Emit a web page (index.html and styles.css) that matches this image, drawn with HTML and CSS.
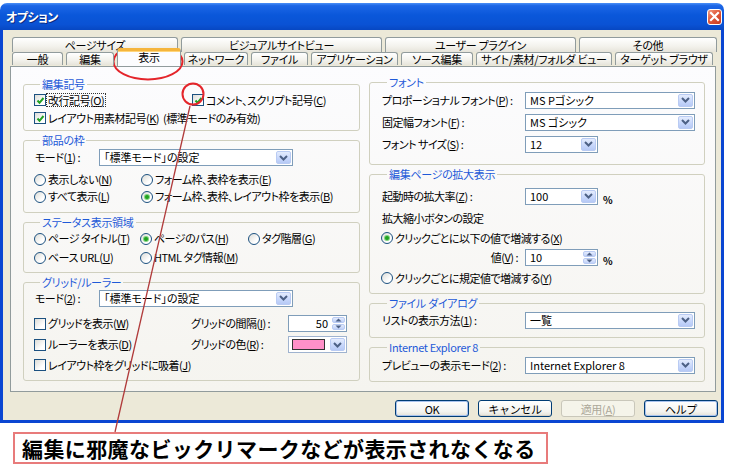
FILE: index.html
```html
<!DOCTYPE html>
<html lang="ja">
<head>
<meta charset="utf-8">
<title>オプション</title>
<link rel="stylesheet" href="styles.css">
</head>
<body>
<div class="window">
  <div class="titlebar">
    <span class="title">オプション</span>
    <span class="close"><svg width="11" height="11" viewBox="0 0 11 11"><path d="M2 2 L9 9 M9 2 L2 9" stroke="#fff" stroke-width="2.2" stroke-linecap="square"/></svg></span>
  </div>
  <div class="client">
    <div class="tabs">
      <div class="tabrow back">
        <div class="tab t1">ページサイズ</div>
        <div class="tab t2">ビジュアルサイトビュー</div>
        <div class="tab t3">ユーザー プラグイン</div>
        <div class="tab t4">その他</div>
      </div>
      <div class="tabrow front">
        <div class="tab f1">一般</div>
        <div class="tab f2">編集</div>
        <div class="tab f3 sel">表示</div>
        <div class="tab f4">ネットワーク</div>
        <div class="tab f5">ファイル</div>
        <div class="tab f6">アプリケーション</div>
        <div class="tab f7">ソース編集</div>
        <div class="tab f8">サイト/素材/フォルダ ビュー</div>
        <div class="tab f9">ターゲット ブラウザ</div>
      </div>
    </div>
    <div class="panel">
      <div class="col col-left">
        <fieldset class="grp g1">
          <legend>編集記号</legend>
          <div class="row r18 cols-g1">
            <label class="opt"><span class="cb on"><svg width="9" height="9" viewBox="0 0 9 9"><path d="M1.5 4.5 L3.5 6.8 L7.5 2" stroke="#21A121" stroke-width="2" fill="none"/></svg></span><span class="focus">改行記号(<u>O</u>)</span></label>
            <label class="opt"><span class="cb on"><svg width="9" height="9" viewBox="0 0 9 9"><path d="M1.5 4.5 L3.5 6.8 L7.5 2" stroke="#21A121" stroke-width="2" fill="none"/></svg></span><span class="txt">コメント、スクリプト記号(<u>C</u>)</span></label>
          </div>
          <div class="row r18">
            <label class="opt"><span class="cb on"><svg width="9" height="9" viewBox="0 0 9 9"><path d="M1.5 4.5 L3.5 6.8 L7.5 2" stroke="#21A121" stroke-width="2" fill="none"/></svg></span><span class="txt">レイアウト用素材記号(<u>K</u>)&nbsp;&nbsp;(標準モードのみ有効)</span></label>
          </div>
        </fieldset>

        <fieldset class="grp g2">
          <legend>部品の枠</legend>
          <div class="row r21 cols-mode">
            <span class="lbl">モード(<u>1</u>) :</span>
            <div class="combo w194"><span class="val">「標準モード」の設定</span><span class="dd"><svg width="9" height="6" viewBox="0 0 9 6"><path d="M1 1 L4.5 4.5 L8 1" stroke="#4D6185" stroke-width="2" fill="none"/></svg></span></div>
          </div>
          <div class="radios">
            <div class="row r17 cols-r2">
              <label class="opt"><span class="rb"></span><span class="txt">表示しない(<u>N</u>)</span></label>
              <label class="opt"><span class="rb"></span><span class="txt">フォーム枠、表枠を表示(<u>E</u>)</span></label>
            </div>
            <div class="row r17 cols-r2">
              <label class="opt"><span class="rb"></span><span class="txt">すべて表示(<u>L</u>)</span></label>
              <label class="opt"><span class="rb on"></span><span class="txt">フォーム枠、表枠、レイアウト枠を表示(<u>B</u>)</span></label>
            </div>
          </div>
        </fieldset>

        <fieldset class="grp g3">
          <legend>ステータス表示領域</legend>
          <div class="row r19 cols-r3">
            <label class="opt"><span class="rb"></span><span class="txt">ページ タイトル(<u>T</u>)</span></label>
            <label class="opt"><span class="rb on"></span><span class="txt">ページのパス(<u>H</u>)</span></label>
            <label class="opt"><span class="rb"></span><span class="txt">タグ階層(<u>G</u>)</span></label>
          </div>
          <div class="row r19 cols-r3">
            <label class="opt"><span class="rb"></span><span class="txt">ベース URL(<u>U</u>)</span></label>
            <label class="opt"><span class="rb"></span><span class="txt">HTML タグ情報(<u>M</u>)</span></label>
          </div>
        </fieldset>

        <fieldset class="grp g4">
          <legend>グリッド/ルーラー</legend>
          <div class="row r20 cols-mode">
            <span class="lbl">モード(<u>2</u>) :</span>
            <div class="combo w194"><span class="val">「標準モード」の設定</span><span class="dd"><svg width="9" height="6" viewBox="0 0 9 6"><path d="M1 1 L4.5 4.5 L8 1" stroke="#4D6185" stroke-width="2" fill="none"/></svg></span></div>
          </div>
          <div class="gridrows">
            <div class="row r21 cols-grid">
              <label class="opt"><span class="cb"></span><span class="txt">グリッドを表示(<u>W</u>)</span></label>
              <span class="lbl">グリッドの間隔(<u>I</u>) :</span>
              <div class="spin w59"><span class="val right">50</span><span class="arrows"><span class="up"><svg width="7" height="4" viewBox="0 0 7 4"><path d="M0.5 3.5 L3.5 0.5 L6.5 3.5Z" fill="#4D6185"/></svg></span><span class="down"><svg width="7" height="4" viewBox="0 0 7 4"><path d="M0.5 0.5 L3.5 3.5 L6.5 0.5Z" fill="#4D6185"/></svg></span></span></div>
            </div>
            <div class="row r21 cols-grid">
              <label class="opt"><span class="cb"></span><span class="txt">ルーラーを表示(<u>D</u>)</span></label>
              <span class="lbl">グリッドの色(<u>R</u>) :</span>
              <div class="colorpick w59"><span class="swatch"></span><span class="dd"><svg width="9" height="6" viewBox="0 0 9 6"><path d="M1 1 L4.5 4.5 L8 1" stroke="#4D6185" stroke-width="2" fill="none"/></svg></span></div>
            </div>
            <div class="row r20">
              <label class="opt"><span class="cb"></span><span class="txt">レイアウト枠をグリッドに吸着(<u>J</u>)</span></label>
            </div>
          </div>
        </fieldset>
      </div>

      <div class="col col-right">
        <fieldset class="grp h1">
          <legend>フォント</legend>
          <div class="row r22 cols-right">
            <span class="lbl">プロポーショナル フォント(<u>P</u>) :</span>
            <div class="combo w170"><span class="val">MS Pゴシック</span><span class="dd"><svg width="9" height="6" viewBox="0 0 9 6"><path d="M1 1 L4.5 4.5 L8 1" stroke="#4D6185" stroke-width="2" fill="none"/></svg></span></div>
          </div>
          <div class="row r22 cols-right">
            <span class="lbl">固定幅フォント(<u>F</u>) :</span>
            <div class="combo w170"><span class="val">MS ゴシック</span><span class="dd"><svg width="9" height="6" viewBox="0 0 9 6"><path d="M1 1 L4.5 4.5 L8 1" stroke="#4D6185" stroke-width="2" fill="none"/></svg></span></div>
          </div>
          <div class="row r22 cols-right">
            <span class="lbl">フォント サイズ(<u>S</u>) :</span>
            <div class="combo w73"><span class="val">12</span><span class="dd"><svg width="9" height="6" viewBox="0 0 9 6"><path d="M1 1 L4.5 4.5 L8 1" stroke="#4D6185" stroke-width="2" fill="none"/></svg></span></div>
          </div>
        </fieldset>

        <fieldset class="grp h2">
          <legend>編集ページの拡大表示</legend>
          <div class="row r22 cols-right">
            <span class="lbl">起動時の拡大率(<u>Z</u>) :</span>
            <div class="withunit"><div class="combo w73"><span class="val">100</span><span class="dd"><svg width="9" height="6" viewBox="0 0 9 6"><path d="M1 1 L4.5 4.5 L8 1" stroke="#4D6185" stroke-width="2" fill="none"/></svg></span></div><span class="unit">%</span></div>
          </div>
          <div class="row r22">
            <span class="lbl">拡大縮小ボタンの設定</span>
          </div>
          <div class="row r18">
            <label class="opt"><span class="rb on"></span><span class="txt">クリックごとに以下の値で増減する(<u>X</u>)</span></label>
          </div>
          <div class="row r20 cols-right">
            <span class="lbl rt">値(<u>V</u>) :</span>
            <div class="withunit"><div class="spin w73"><span class="val">10</span><span class="arrows"><span class="up"><svg width="7" height="4" viewBox="0 0 7 4"><path d="M0.5 3.5 L3.5 0.5 L6.5 3.5Z" fill="#4D6185"/></svg></span><span class="down"><svg width="7" height="4" viewBox="0 0 7 4"><path d="M0.5 0.5 L3.5 3.5 L6.5 0.5Z" fill="#4D6185"/></svg></span></span></div><span class="unit">%</span></div>
          </div>
          <div class="row r22">
            <label class="opt"><span class="rb"></span><span class="txt">クリックごとに規定値で増減する(<u>Y</u>)</span></label>
          </div>
        </fieldset>

        <fieldset class="grp h3">
          <legend>ファイル ダイアログ</legend>
          <div class="row r22 cols-right">
            <span class="lbl">リストの表示方法(<u>1</u>) :</span>
            <div class="combo w170"><span class="val">一覧</span><span class="dd"><svg width="9" height="6" viewBox="0 0 9 6"><path d="M1 1 L4.5 4.5 L8 1" stroke="#4D6185" stroke-width="2" fill="none"/></svg></span></div>
          </div>
        </fieldset>

        <fieldset class="grp h4">
          <legend>Internet Explorer 8</legend>
          <div class="row r20 cols-right">
            <span class="lbl">プレビューの表示モード(<u>2</u>) :</span>
            <div class="combo w170"><span class="val">Internet Explorer 8</span><span class="dd"><svg width="9" height="6" viewBox="0 0 9 6"><path d="M1 1 L4.5 4.5 L8 1" stroke="#4D6185" stroke-width="2" fill="none"/></svg></span></div>
          </div>
        </fieldset>
      </div>
    </div>
    <div class="buttons">
      <button class="btn def">OK</button>
      <button class="btn">キャンセル</button>
      <button class="btn dis">適用(<u>A</u>)</button>
      <button class="btn def">ヘルプ</button>
    </div>
  </div>
</div>
<div class="note">編集に邪魔なビックリマークなどが表示されなくなる</div>
<svg class="marks" width="730" height="471" viewBox="0 0 730 471">
  <line x1="190" y1="106" x2="115" y2="432" stroke="#B03A3A" stroke-width="1.3"/>
  <ellipse cx="148" cy="61.5" rx="34.5" ry="18" fill="none" stroke="#E4252B" stroke-width="2"/>
  <circle cx="193" cy="94" r="10.5" fill="none" stroke="#E4252B" stroke-width="2"/>
</svg>
</body>
</html>
```

FILE: styles.css
```css
* { box-sizing: border-box; }
html, body { margin: 0; padding: 0; background: #fff; }
body {
  width: 730px;
  height: 471px;
  overflow: hidden;
  position: relative;
  font-family: "Noto Sans CJK JP", "Noto Sans", sans-serif;
  font-size: 11px;
  line-height: 13px;
  color: #000;
  font-feature-settings: "palt";
}
u { text-decoration: underline; text-underline-offset: 1px; }

.window { margin-top: 3px; width: 724px; }
.titlebar {
  height: 27px;
  border-radius: 7px 7px 0 0;
  background: linear-gradient(#4A8FF7 0%, #1C66E6 10%, #0A57DA 45%, #0A52D4 80%, #0747C2 100%);
  display: flex;
  align-items: center;
  justify-content: space-between;
  padding: 0 2px 0 6px;
}
.title { color: #fff; font-weight: 700; font-size: 12px; line-height: 14px; text-shadow: 1px 1px #0A2A80; letter-spacing: -0.5px; }
.close {
  width: 15px; height: 16px;
  border: 1px solid #fff;
  border-radius: 3px;
  background: linear-gradient(135deg, #F3A085, #E0583A 45%, #C93A20);
  display: flex; align-items: center; justify-content: center;
}

.client {
  height: 393px;
  background: #ECE9D8;
  border: 3px solid #0A46D2;
  border-top: 0;
}

.tabs { padding: 7px 0 0 9px; position: relative; z-index: 1; }
.tabrow { display: flex; gap: 3px; }
.tab {
  border: 1px solid #919B9C;
  border-bottom: 0;
  border-radius: 3px 3px 0 0;
  background: linear-gradient(#FFFFFF, #F3F2EC 60%, #E6E4DA);
  text-align: center;
  white-space: nowrap;
  letter-spacing: -0.3px;
}
.back .tab { height: 15px; line-height: 14px; }
.front .tab { height: 13px; line-height: 12px; }
.front .tab.sel {
  height: 18px;
  margin-top: -4px;
  line-height: 13px;
  background: #FCFCFE;
  border-top: 3px solid #F5B53C;
  box-shadow: inset 0 1px #FFD57A;
}
.t1 { width: 166px; } .t2 { width: 201px; } .t3 { width: 191px; } .t4 { width: 138px; }
.f1 { width: 51px; } .f2 { width: 48px; } .f3 { width: 64px; } .f4 { width: 64px; }
.f5 { width: 57px; } .f6 { width: 87px; } .f7 { width: 72px; } .f8 { width: 136px; } .f9 { width: 98px; }

.panel {
  margin-left: 7px;
  width: 706px;
  height: 326px;
  border: 1px solid #919B9C;
  background: linear-gradient(#FCFCFE, #F5F4EF);
  display: flex;
  gap: 9px;
  padding: 0 10px 0 12px;
  letter-spacing: -0.5px;
}
.col { display: flex; flex-direction: column; gap: 3px; }
.col-left { width: 337px; padding-top: 11px; }
.col-right { width: 336px; padding-top: 9px; }

fieldset.grp {
  margin: 0;
  padding: 0 0 0 10px;
  border: 1px solid #D0D0BF;
  border-radius: 3px;
  min-width: 0;
}
.col-right fieldset.grp { padding-left: 11px; }
legend {
  padding: 0 2px;
  margin-left: 6px;
  color: #1F5AD8;
  line-height: 12px;
  font-size: 11px;
  letter-spacing: -0.3px;
}
.g1 { padding-top: 1px !important; padding-bottom: 3px !important; }
.g2 { padding-top: 1px !important; padding-bottom: 7px !important; }
.g2 .radios { margin-top: 3px; }
.g3 { padding-top: 1px !important; padding-bottom: 5px !important; }
.g4 { padding-bottom: 5px !important; }
.g4 .gridrows { margin-top: 5px; }
.h1 { padding-top: 1px !important; padding-bottom: 9px !important; }
.h2 { padding-top: 5px !important; padding-bottom: 4px !important; }
.h3 { padding-bottom: 6px !important; }
.h4 { padding-top: 2px !important; padding-bottom: 6px !important; }

.row { display: flex; align-items: center; white-space: nowrap; }
.r17 { height: 17px; } .r18 { height: 18px; } .r19 { height: 19px; }
.r20 { height: 20px; } .r21 { height: 21px; } .r22 { height: 22px; }
.cols-g1 { display: grid; grid-template-columns: 158px auto; align-items: center; }
.cols-mode { display: grid; grid-template-columns: 65px auto; align-items: center; }
.cols-r2 { display: grid; grid-template-columns: 107px auto; align-items: center; }
.cols-r3 { display: grid; grid-template-columns: 106px 108px auto; align-items: center; }
.cols-grid { display: grid; grid-template-columns: 156px 98px 59px; align-items: center; }
.cols-right { display: grid; grid-template-columns: 144px auto; align-items: center; }
.lbl { padding-left: 1px; }
.lbl.rt { text-align: right; padding-right: 7px; }

.opt { display: flex; align-items: center; }
.txt { margin-left: 2px; }
.focus { margin-left: 1px; padding: 0 1px; outline: 1px dotted #333; outline-offset: 0; line-height: 12px; }
.cb {
  width: 12px; height: 12px;
  border: 1px solid #1C5180;
  background: linear-gradient(135deg, #DCDCD7, #FFFFFF 70%);
  display: flex; align-items: center; justify-content: center;
  flex: none;
}
.rb {
  width: 12px; height: 12px;
  border: 1px solid #1C5180;
  border-radius: 50%;
  background: linear-gradient(135deg, #DCDCD7, #FFFFFF 70%);
  flex: none;
  display: flex; align-items: center; justify-content: center;
}
.rb.on::after {
  content: "";
  width: 4px; height: 4px;
  border-radius: 50%;
  background: #21A121;
  box-shadow: 0 0 0 1px #7ED37E;
}

.combo, .spin, .colorpick {
  height: 17px;
  border: 1px solid #7F9DB9;
  background: #fff;
  display: flex;
  align-items: stretch;
}
.w194 { width: 194px; } .w170 { width: 170px; } .w73 { width: 73px; } .w59 { width: 59px; }
.val { flex: 1; padding-left: 4px; line-height: 15px; overflow: hidden; letter-spacing: 0; }
.val.right { text-align: right; padding-right: 3px; }
.dd {
  width: 15px;
  margin: 1px;
  border-radius: 2px;
  border: 1px solid #B9CBF3;
  background: linear-gradient(#E4ECFD, #C6D6FB 60%, #B6C9F5);
  display: flex; align-items: center; justify-content: center;
}
.arrows { width: 13px; display: flex; flex-direction: column; margin: 1px; gap: 1px; }
.arrows span {
  flex: 1;
  border-radius: 2px;
  border: 1px solid #B9CBF3;
  background: linear-gradient(#E4ECFD, #BFD0F8);
  display: flex; align-items: center; justify-content: center;
}
.colorpick { border-color: #9FB3CF; }
.swatch { flex: 1; margin: 2px 4px 2px 3px; background: #FF90C8; border: 1px solid #333; }
.withunit { display: flex; align-items: center; }
.unit { margin-left: 5px; margin-top: 6px; font-size: 10px; font-weight: 700; }

.buttons {
  display: flex;
  justify-content: flex-end;
  gap: 9px;
  padding: 8px 3px 0 0;
}
.btn {
  width: 74px; height: 17px;
  margin: 0; padding: 0;
  font-family: inherit;
  font-size: 11px;
  line-height: 14px;
  color: #000;
  border: 1px solid #003C74;
  border-radius: 3px;
  background: linear-gradient(#FFFFFF, #F4F4F0 70%, #E3E1D7);
  box-shadow: inset 0 -1px #D6D0C5;
  letter-spacing: -0.3px;
}
.btn.def { box-shadow: inset 0 0 0 1px #A9C3EE, inset 0 -1px #89ADE4; }
.btn.dis { border-color: #C9C7BA; color: #ACA899; background: #F5F4EA; box-shadow: none; }

.note {
  margin: 9px 0 0 13px;
  width: 535px;
  height: 32px;
  border: 2px solid #E87B7B;
  display: flex;
  align-items: center;
  padding-left: 7px;
  font-size: 21px;
  line-height: 26px;
  font-weight: 700;
  letter-spacing: 0.4px;
  font-feature-settings: normal;
  white-space: nowrap;
}

.marks { position: absolute; left: 0; top: 0; pointer-events: none; }
```
